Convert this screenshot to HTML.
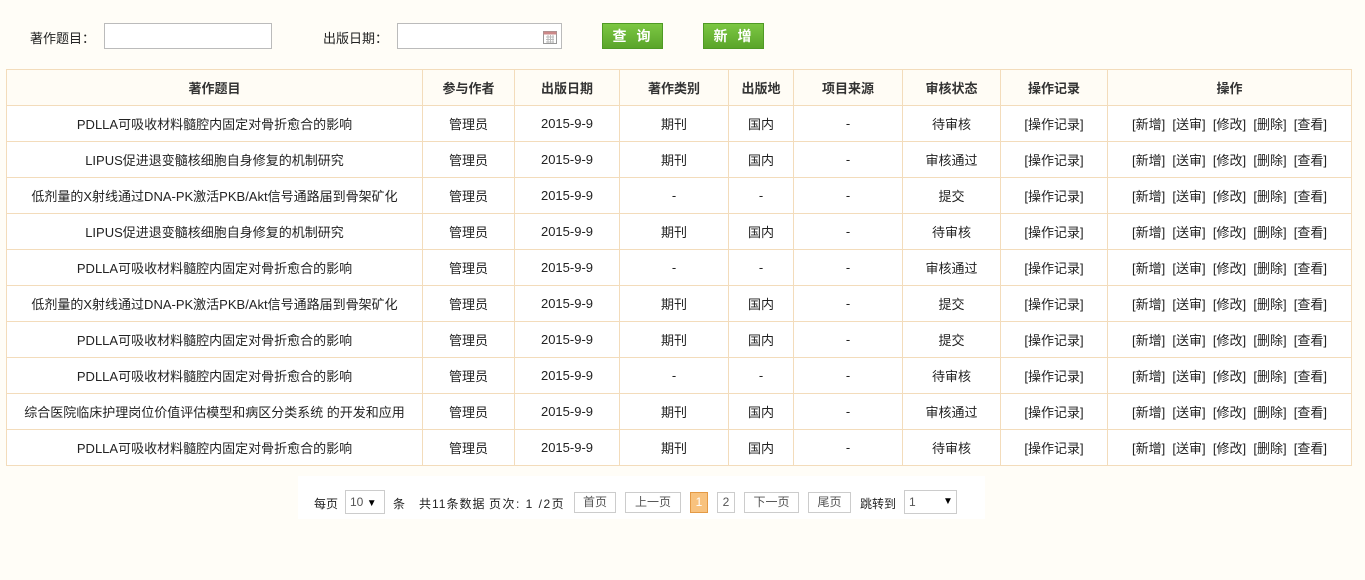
<!DOCTYPE html>
<html><head><meta charset="utf-8"><style>
*{margin:0;padding:0;box-sizing:border-box}
body{width:1365px;height:580px;background:#fffdf7;font-family:"Liberation Sans","Noto Sans CJK SC",sans-serif;font-size:13px;color:#222;position:relative;overflow:hidden}
.a{position:absolute}
.inp{border:1px solid #bbb;background:#fff;height:26px}
.btn{background:linear-gradient(#7cc743,#5aa52a);border:1px solid #4f9a25;color:#fff;font-weight:bold;font-size:14px;text-align:center;line-height:24px;letter-spacing:10px;text-indent:8px}
table{position:absolute;left:6px;top:69px;border-collapse:collapse;table-layout:fixed;width:1345px}
td,th{border:1px solid #f3dcbb;height:36px;text-align:center;font-size:13px;white-space:nowrap;background:#fff;font-weight:normal;overflow:hidden}
th{background:#fffcf5;font-weight:bold;color:#333}
.pg{left:298px;top:476px;width:687px;height:43px;background:#fff;font-size:12px}
.pg span{position:absolute;top:19px}
.b{position:absolute;top:16px;height:21px;border:1px solid #ccc;line-height:19px;text-align:center;color:#555;background:#fff}
</style></head><body>
<div class="a" style="left:30px;top:28px">著作题目：</div>
<div class="a inp" style="left:104px;top:23px;width:168px"></div>
<div class="a" style="left:323px;top:28px">出版日期：</div>
<div class="a inp" style="left:397px;top:23px;width:165px"><svg class="a" style="left:145px;top:6px" width="14" height="14"><rect x=".5" y="1.5" width="13" height="12" fill="#fff" stroke="#999"/><rect x=".5" y="1.5" width="13" height="3" fill="#c88"/><path d="M3 7h8M3 9.5h8M3 12h8M5 5v8M7.5 5v8M10 5v8" stroke="#bbb"/></svg></div>
<div class="a btn" style="left:602px;top:23px;width:61px;height:26px">查询</div>
<div class="a btn" style="left:703px;top:23px;width:61px;height:26px">新增</div>
<table>
<colgroup><col style="width:416px"><col style="width:92px"><col style="width:105px"><col style="width:109px"><col style="width:65px"><col style="width:109px"><col style="width:98px"><col style="width:107px"><col style="width:244px"></colgroup>
<tr><th>著作题目</th><th>参与作者</th><th>出版日期</th><th>著作类别</th><th>出版地</th><th>项目来源</th><th>审核状态</th><th>操作记录</th><th>操作</th></tr>
<tr><td>PDLLA可吸收材料髓腔内固定对骨折愈合的影响</td><td>管理员</td><td>2015-9-9</td><td>期刊</td><td>国内</td><td>-</td><td>待审核</td><td>[操作记录]</td><td>[新增]&nbsp; [送审]&nbsp; [修改]&nbsp; [删除]&nbsp; [查看]</td></tr>
<tr><td>LIPUS促进退变髓核细胞自身修复的机制研究</td><td>管理员</td><td>2015-9-9</td><td>期刊</td><td>国内</td><td>-</td><td>审核通过</td><td>[操作记录]</td><td>[新增]&nbsp; [送审]&nbsp; [修改]&nbsp; [删除]&nbsp; [查看]</td></tr>
<tr><td>低剂量的X射线通过DNA-PK激活PKB/Akt信号通路届到骨架矿化</td><td>管理员</td><td>2015-9-9</td><td>-</td><td>-</td><td>-</td><td>提交</td><td>[操作记录]</td><td>[新增]&nbsp; [送审]&nbsp; [修改]&nbsp; [删除]&nbsp; [查看]</td></tr>
<tr><td>LIPUS促进退变髓核细胞自身修复的机制研究</td><td>管理员</td><td>2015-9-9</td><td>期刊</td><td>国内</td><td>-</td><td>待审核</td><td>[操作记录]</td><td>[新增]&nbsp; [送审]&nbsp; [修改]&nbsp; [删除]&nbsp; [查看]</td></tr>
<tr><td>PDLLA可吸收材料髓腔内固定对骨折愈合的影响</td><td>管理员</td><td>2015-9-9</td><td>-</td><td>-</td><td>-</td><td>审核通过</td><td>[操作记录]</td><td>[新增]&nbsp; [送审]&nbsp; [修改]&nbsp; [删除]&nbsp; [查看]</td></tr>
<tr><td>低剂量的X射线通过DNA-PK激活PKB/Akt信号通路届到骨架矿化</td><td>管理员</td><td>2015-9-9</td><td>期刊</td><td>国内</td><td>-</td><td>提交</td><td>[操作记录]</td><td>[新增]&nbsp; [送审]&nbsp; [修改]&nbsp; [删除]&nbsp; [查看]</td></tr>
<tr><td>PDLLA可吸收材料髓腔内固定对骨折愈合的影响</td><td>管理员</td><td>2015-9-9</td><td>期刊</td><td>国内</td><td>-</td><td>提交</td><td>[操作记录]</td><td>[新增]&nbsp; [送审]&nbsp; [修改]&nbsp; [删除]&nbsp; [查看]</td></tr>
<tr><td>PDLLA可吸收材料髓腔内固定对骨折愈合的影响</td><td>管理员</td><td>2015-9-9</td><td>-</td><td>-</td><td>-</td><td>待审核</td><td>[操作记录]</td><td>[新增]&nbsp; [送审]&nbsp; [修改]&nbsp; [删除]&nbsp; [查看]</td></tr>
<tr><td>综合医院临床护理岗位价值评估模型和病区分类系统 的开发和应用</td><td>管理员</td><td>2015-9-9</td><td>期刊</td><td>国内</td><td>-</td><td>审核通过</td><td>[操作记录]</td><td>[新增]&nbsp; [送审]&nbsp; [修改]&nbsp; [删除]&nbsp; [查看]</td></tr>
<tr><td>PDLLA可吸收材料髓腔内固定对骨折愈合的影响</td><td>管理员</td><td>2015-9-9</td><td>期刊</td><td>国内</td><td>-</td><td>待审核</td><td>[操作记录]</td><td>[新增]&nbsp; [送审]&nbsp; [修改]&nbsp; [删除]&nbsp; [查看]</td></tr>
</table>
<div class="a pg">
<span style="left:16px">每页</span>
<div class="b" style="left:47px;top:14px;width:40px;height:24px;text-align:left;padding-left:4px;line-height:22px">10 <span style="position:static;font-size:10px;color:#000">▼</span></div>
<span style="left:95px">条</span>
<span style="left:121px;letter-spacing:1px">共11条数据</span>
<span style="left:191px;letter-spacing:1.5px">页次: 1 /2页</span>
<div class="b" style="left:276px;width:42px">首页</div>
<div class="b" style="left:327px;width:56px">上一页</div>
<div class="b" style="left:392px;width:18px;background:#f8c27e;border-color:#e49a45;color:#fff">1</div>
<div class="b" style="left:419px;width:18px">2</div>
<div class="b" style="left:446px;width:55px">下一页</div>
<div class="b" style="left:510px;width:43px">尾页</div>
<span style="left:562px">跳转到</span>
<div class="b" style="left:606px;top:14px;width:53px;height:24px;text-align:left;padding-left:4px;line-height:22px">1<span style="position:absolute;left:38px;top:0;font-size:10px;color:#000">▼</span></div>
</div>
</body></html>
